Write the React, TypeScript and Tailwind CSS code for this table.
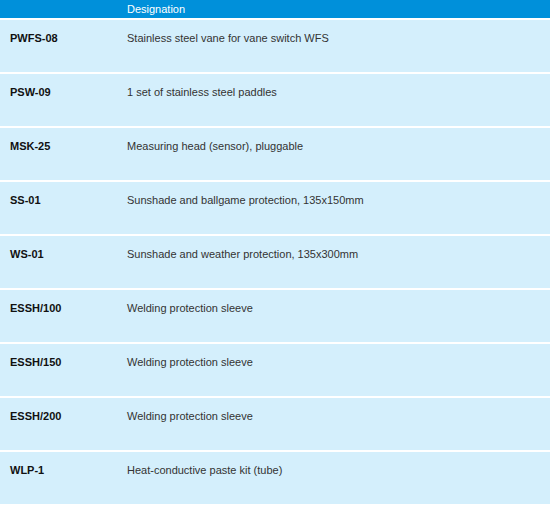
const ROWS = [
  { code: "PWFS-08", desc: "Stainless steel vane for vane switch WFS" },
  { code: "PSW-09", desc: "1 set of stainless steel paddles" },
  { code: "MSK-25", desc: "Measuring head (sensor), pluggable" },
  { code: "SS-01", desc: "Sunshade and ballgame protection, 135x150mm" },
  { code: "WS-01", desc: "Sunshade and weather protection, 135x300mm" },
  { code: "ESSH/100", desc: "Welding protection sleeve" },
  { code: "ESSH/150", desc: "Welding protection sleeve" },
  { code: "ESSH/200", desc: "Welding protection sleeve" },
  { code: "WLP-1", desc: "Heat-conductive paste kit (tube)" },
];

export default function App() {
  return (
    <div className="w-[550px] h-[505px] bg-white font-['Liberation_Sans',Arial,sans-serif] text-[11px] flex flex-col gap-[2px]">
      <div className="h-[18px] bg-[#0090da] flex items-center text-white text-[11px]">
        <div className="w-[127px] shrink-0" />
        <div>Designation</div>
      </div>
      {ROWS.map((row) => (
        <div key={row.code} className="h-[52px] bg-[#d4effc] flex pt-[11px] leading-[14px]">
          <div className="w-[127px] shrink-0 pl-[10px] font-bold text-[#111]">{row.code}</div>
          <div className="text-[#333]">{row.desc}</div>
        </div>
      ))}
    </div>
  );
}
